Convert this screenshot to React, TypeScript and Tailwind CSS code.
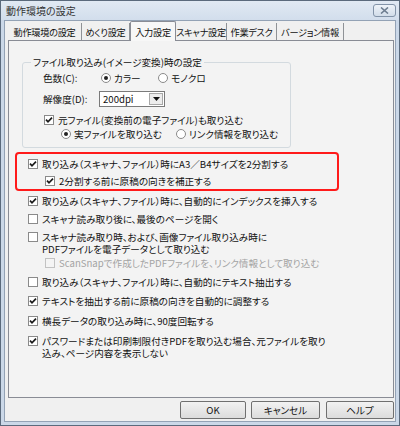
import React from "react";

const Check = ({ checked = false, disabled = false }: { checked?: boolean; disabled?: boolean }) => (
  <span
    className={`w-[10px] h-[10px] shrink-0 border flex items-center justify-center ${
      disabled ? "border-[#c2c2c2] bg-[#f4f4f4]" : "border-[#8a8a8a] bg-white"
    }`}
  >
    {checked && (
      <svg width="8" height="8" viewBox="0 0 8 8">
        <path d="M1 3.6 L3 5.8 L7 1.6" fill="none" stroke="#1a1a1a" strokeWidth="1.7" />
      </svg>
    )}
  </span>
);

const Radio = ({ checked = false }: { checked?: boolean }) => (
  <span className="w-[10px] h-[10px] shrink-0 rounded-full border border-[#8a8a8a] bg-white flex items-center justify-center">
    {checked && <span className="w-[4px] h-[4px] rounded-full bg-[#222]" />}
  </span>
);

const CheckRow = ({
  checked = false,
  disabled = false,
  className = "",
  children,
}: {
  checked?: boolean;
  disabled?: boolean;
  className?: string;
  children: React.ReactNode;
}) => (
  <div className={`flex items-start gap-[4px] ${className}`}>
    <span className="mt-[1px]">
      <Check checked={checked} disabled={disabled} />
    </span>
    <span className={`leading-[12px] whitespace-nowrap ${disabled ? "text-[#a3a3a3]" : ""}`}>{children}</span>
  </div>
);

const tabs: { label: string; w: string; active?: boolean }[] = [
  { label: "動作環境の設定", w: "w-[74px]" },
  { label: "めくり設定", w: "w-[48px]" },
  { label: "入力設定", w: "w-[46px]", active: true },
  { label: "スキャナ設定", w: "w-[51px]" },
  { label: "作業デスク", w: "w-[50px]" },
  { label: "バージョン情報", w: "w-[67px]" },
];

export default function App() {
  return (
    <div className="w-[400px] h-[426px] bg-[#cbd8e8] border border-[#5b6a7c] flex flex-col text-[9.6px] leading-[12px] text-[#111] font-['Noto_Sans_CJK_JP','Noto_Sans',sans-serif] [font-feature-settings:'palt']">
      {/* title bar */}
      <div className="h-[19px] flex items-center justify-between pl-[5px] pr-[3px] bg-gradient-to-b from-[#e1e9f3] to-[#d2deec]">
        <span className="text-[#333] text-[10px]">動作環境の設定</span>
        <span className="w-[23px] h-[13px] rounded-[3px] border border-[#8293a8] bg-gradient-to-b from-[#eef3f9] to-[#d2dde9] flex items-center justify-center">
          <svg width="9" height="7" viewBox="0 0 9 7">
            <path d="M1 0.5 L8 6.5 M8 0.5 L1 6.5" stroke="#6d7d90" strokeWidth="1.6" />
          </svg>
        </span>
      </div>

      {/* body */}
      <div className="flex-1 mx-[3px] mb-[3px] border border-[#93a2b5] bg-[#f0f0f0] flex flex-col pl-[3px] pr-[1px]">
        {/* tabs */}
        <div className="h-[19px] flex items-end text-[9.2px] tracking-[-0.3px]">
          {tabs.map((t) =>
            t.active ? (
              <div
                key={t.label}
                className={`${t.w} h-[20px] -mb-[1px] relative z-10 flex items-center justify-center whitespace-nowrap bg-[#f7f7f7] border-l border-t border-r border-[#898c95] rounded-t-[2px]`}
              >
                {t.label}
              </div>
            ) : (
              <div
                key={t.label}
                className={`${t.w} h-[17px] flex items-center justify-center whitespace-nowrap border-r border-[#8f9296]`}
              >
                {t.label}
              </div>
            )
          )}
        </div>

        {/* panel */}
        <div className="h-[358px] border border-[#898c95] bg-[#f3f3f3] flex flex-col">
          <fieldset className="mt-[15px] ml-[13px] w-[269px] border border-[#d3dadf] rounded-[3px] pb-[7px]">
            <legend className="ml-[8px] px-[2px] leading-[13px]">ファイル取り込み(イメージ変換)時の設定</legend>
            <div className="h-[13px] mt-[2px] pl-[20px] flex items-center">
              <span className="w-[58px]">色数(C):</span>
              <span className="flex items-center gap-[3px] w-[57px]">
                <Radio checked />
                カラー
              </span>
              <span className="flex items-center gap-[3px]">
                <Radio />
                モノクロ
              </span>
            </div>
            <div className="h-[16px] mt-[7px] pl-[20px] flex items-center">
              <span className="w-[56px]">解像度(D):</span>
              <span className="w-[66px] h-[16px] bg-white border border-[#7a7a7a] flex items-center justify-between pl-[3px] pr-[1px]">
                200dpi
                <span className="w-[14px] h-[12px] border border-[#a8a8a8] bg-[#ececec] flex items-center justify-center">
                  <svg width="7" height="4" viewBox="0 0 7 4">
                    <path d="M0 0 H7 L3.5 4 Z" fill="#111" />
                  </svg>
                </span>
              </span>
            </div>
            <CheckRow checked className="mt-[7px] pl-[21px]">
              元ファイル(変換前の電子ファイル)も取り込む
            </CheckRow>
            <div className="h-[13px] mt-[1px] pl-[38px] flex items-center">
              <span className="flex items-center gap-[3px] w-[115px]">
                <Radio checked />
                実ファイルを取り込む
              </span>
              <span className="flex items-center gap-[3px]">
                <Radio />
                リンク情報を取り込む
              </span>
            </div>
          </fieldset>

          <div className="mt-[4px] ml-[6px] w-[324px] border-2 border-[#ff1a1a] rounded-[4px] pl-[11px] pt-[4px] pb-[2px] flex flex-col">
            <CheckRow checked>取り込み（スキャナ、ファイル）時にA3／B4サイズを2分割する</CheckRow>
            <CheckRow checked className="mt-[5px] pl-[17px]">
              2分割する前に原稿の向きを補正する
            </CheckRow>
          </div>

          <div className="ml-[19px] flex flex-col">
            <CheckRow checked className="mt-[4px]">
              取り込み（スキャナ、ファイル）時に、自動的にインデックスを挿入する
            </CheckRow>
            <CheckRow className="mt-[6px]">スキャナ読み取り後に、最後のページを開く</CheckRow>
            <CheckRow className="mt-[6px]">
              スキャナ読み取り時、および、画像ファイル取り込み時に
              <br />
              PDFファイルを電子データとして取り込む
            </CheckRow>
            <CheckRow disabled className="mt-[2px] pl-[17px]">
              ScanSnapで作成したPDFファイルを、リンク情報として取り込む
            </CheckRow>
            <CheckRow className="mt-[7px]">取り込み（スキャナ、ファイル）時に、自動的にテキスト抽出する</CheckRow>
            <CheckRow checked className="mt-[7px]">
              テキストを抽出する前に原稿の向きを自動的に調整する
            </CheckRow>
            <CheckRow checked className="mt-[8px]">
              横長データの取り込み時に、90度回転する
            </CheckRow>
            <CheckRow checked className="mt-[8px]">
              パスワードまたは印刷制限付きPDFを取り込む場合、元ファイルを取り
              <br />
              込み、ページ内容を表示しない
            </CheckRow>
          </div>
        </div>

        {/* buttons */}
        <div className="mt-[3px] h-[18px] flex justify-end">
          <button className="w-[66px] h-[18px] border border-[#707070] rounded-[2px] bg-gradient-to-b from-[#f2f2f2] to-[#dcdcdc]">
            OK
          </button>
          <button className="ml-[5px] w-[69px] h-[18px] border border-[#707070] rounded-[2px] bg-gradient-to-b from-[#f2f2f2] to-[#dcdcdc]">
            キャンセル
          </button>
          <button className="ml-[6px] w-[68px] h-[18px] border border-[#707070] rounded-[2px] bg-gradient-to-b from-[#f2f2f2] to-[#dcdcdc]">
            ヘルプ
          </button>
        </div>
      </div>
    </div>
  );
}
